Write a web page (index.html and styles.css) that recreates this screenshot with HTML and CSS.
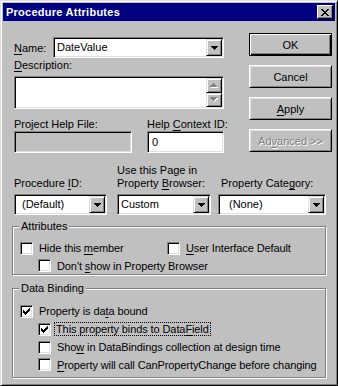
FILE: index.html
```html
<!DOCTYPE html>
<html lang="en">
<head>
    <meta charset="utf-8">
    <title>Procedure Attributes</title>
    <link rel="stylesheet" href="styles.css">
</head>
<body>
<div class="window">
    <div class="titlebar">
        <span class="title">Procedure Attributes</span>
        <button class="close-btn">
            <svg width="8" height="7" viewBox="0 0 8 7" shape-rendering="crispEdges"><path d="M0 0h2v1h-2zM6 0h2v1h-2zM1 1h2v1h-2zM5 1h2v1h-2zM2 2h4v1h-4zM3 3h2v1h-2zM2 4h4v1h-4zM1 5h2v1h-2zM5 5h2v1h-2zM0 6h2v1h-2zM6 6h2v1h-2z" fill="#000"/></svg>
        </button>
    </div>
    <div class="dialog">
        <div class="top">
            <div class="fields">
                <div class="name-row">
                    <span class="name-label"><u>N</u>ame:</span>
                    <div class="combo name-combo">
                        <span class="combo-text">DateValue</span>
                        <span class="drop-btn"><svg width="7" height="4" viewBox="0 0 7 4" shape-rendering="crispEdges"><path d="M0 0h7v1h-7zM1 1h5v1h-5zM2 2h3v1h-3zM3 3h1v1h-1z" fill="#000"/></svg></span>
                    </div>
                </div>
                <div class="desc-label"><u>D</u>escription:</div>
                <div class="field desc-box">
                    <div class="vscroll">
                        <span class="scroll-btn"><svg width="8" height="5" viewBox="0 0 8 5" shape-rendering="crispEdges"><path d="M4 1h1v1h-1zM3 2h3v1h-3zM2 3h5v1h-5zM1 4h7v1h-7z" fill="#fff"/><path d="M3 0h1v1h-1zM2 1h3v1h-3zM1 2h5v1h-5zM0 3h7v1h-7z" fill="#808080"/></svg></span>
                        <span class="scroll-btn"><svg width="8" height="5" viewBox="0 0 8 5" shape-rendering="crispEdges"><path d="M1 1h7v1h-7zM2 2h5v1h-5zM3 3h3v1h-3zM4 4h1v1h-1z" fill="#fff"/><path d="M0 0h7v1h-7zM1 1h5v1h-5zM2 2h3v1h-3zM3 3h1v1h-1z" fill="#808080"/></svg></span>
                    </div>
                </div>
                <div class="help-row">
                    <div class="help-file">
                        <div class="label">Project Help File:</div>
                        <div class="field disabled-box"></div>
                    </div>
                    <div class="help-id">
                        <div class="label">Help <u>C</u>ontext ID:</div>
                        <div class="field text-box">0</div>
                    </div>
                </div>
            </div>
            <div class="buttons">
                <button class="btn default-btn">OK</button>
                <button class="btn">Cancel</button>
                <button class="btn"><u>A</u>pply</button>
                <button class="btn disabled-btn">Ad<u>v</u>anced &gt;&gt;</button>
            </div>
        </div>

        <div class="combos-row">
            <div class="combo-col proc-col">
                <div class="label">Procedure <u>I</u>D:</div>
                <div class="combo">
                    <span class="combo-text indent">(Default)</span>
                    <span class="drop-btn"><svg width="7" height="4" viewBox="0 0 7 4" shape-rendering="crispEdges"><path d="M0 0h7v1h-7zM1 1h5v1h-5zM2 2h3v1h-3zM3 3h1v1h-1z" fill="#000"/></svg></span>
                </div>
            </div>
            <div class="combo-col page-col">
                <div class="label">Use this Page in<br>Property <u>B</u>rowser:</div>
                <div class="combo">
                    <span class="combo-text">Custom</span>
                    <span class="drop-btn"><svg width="7" height="4" viewBox="0 0 7 4" shape-rendering="crispEdges"><path d="M0 0h7v1h-7zM1 1h5v1h-5zM2 2h3v1h-3zM3 3h1v1h-1z" fill="#000"/></svg></span>
                </div>
            </div>
            <div class="combo-col cat-col">
                <div class="label">Property Cate<u>g</u>ory:</div>
                <div class="combo">
                    <span class="combo-text indent-wide">(None)</span>
                    <span class="drop-btn"><svg width="7" height="4" viewBox="0 0 7 4" shape-rendering="crispEdges"><path d="M0 0h7v1h-7zM1 1h5v1h-5zM2 2h3v1h-3zM3 3h1v1h-1z" fill="#000"/></svg></span>
                </div>
            </div>
        </div>

        <fieldset class="group attributes">
            <legend>Attributes</legend>
            <div class="check-row">
                <label class="check wide"><span class="box"></span><span class="check-text">Hide this <u>m</u>ember</span></label>
                <label class="check"><span class="box"></span><span class="check-text"><u>U</u>ser Interface Default</span></label>
            </div>
            <div class="check-row sub short">
                <label class="check"><span class="box"></span><span class="check-text">Don't <u>s</u>how in Property Browser</span></label>
            </div>
        </fieldset>

        <fieldset class="group binding">
            <legend>Data Binding</legend>
            <div class="check-row">
                <label class="check"><span class="box"><svg width="9" height="9" viewBox="0 0 9 9" shape-rendering="crispEdges"><path d="M7 1h1v1h-1zM6 2h2v1h-2zM1 3h1v1h-1zM5 3h3v1h-3zM1 4h2v1h-2zM4 4h3v1h-3zM1 5h5v1h-5zM2 6h3v1h-3zM3 7h1v1h-1z" fill="#000"/></svg></span><span class="check-text">Property is da<u>t</u>a bound</span></label>
            </div>
            <div class="check-row sub">
                <label class="check"><span class="box"><svg width="9" height="9" viewBox="0 0 9 9" shape-rendering="crispEdges"><path d="M7 1h1v1h-1zM6 2h2v1h-2zM1 3h1v1h-1zM5 3h3v1h-3zM1 4h2v1h-2zM4 4h3v1h-3zM1 5h5v1h-5zM2 6h3v1h-3zM3 7h1v1h-1z" fill="#000"/></svg></span><span class="check-text focused">This property binds to Data<u>F</u>ield</span></label>
            </div>
            <div class="check-row sub">
                <label class="check"><span class="box"></span><span class="check-text">Sho<u>w</u> in DataBindings collection at design time</span></label>
            </div>
            <div class="check-row sub short">
                <label class="check"><span class="box"></span><span class="check-text"><u>P</u>roperty will call CanPropertyChange before changing</span></label>
            </div>
        </fieldset>
    </div>
</div>
</body>
</html>
```

FILE: styles.css
```css
* { box-sizing: border-box; }
body {
    margin: 0;
    background-color: #c0c0c0;
    font-family: "Liberation Sans", Arial, sans-serif;
    font-size: 11px;
    color: #000;
}
u { text-decoration-thickness: 1px; text-underline-offset: 2px; }

/* window frame */
.window {
    width: 338px;
    height: 386px;
    background-color: #c0c0c0;
    border: 1px solid;
    border-color: #dfdfdf #000 #000 #dfdfdf;
    box-shadow: inset 1px 1px #fff, inset -1px -1px #808080;
    padding: 2px;
}
.titlebar {
    height: 18px;
    background-color: #000080;
    display: flex;
    align-items: center;
    justify-content: space-between;
    padding: 0 2px 0 3px;
}
.title {
    color: #fff;
    font-weight: bold;
    font-size: 11px;
    letter-spacing: 0.25px;
}
.close-btn {
    width: 16px;
    height: 14px;
    padding: 0;
    background-color: #c0c0c0;
    border: 1px solid;
    border-color: #fff #000 #000 #fff;
    box-shadow: inset -1px -1px #808080;
    display: flex;
    align-items: center;
    justify-content: center;
}

.dialog { padding: 12px 0 0 11px; }

/* sunken 3d edit fields */
.field, .combo {
    border: 1px solid;
    border-color: #808080 #fff #fff #808080;
    box-shadow: inset 1px 1px #000, inset -1px -1px #dfdfdf;
    background-color: #fff;
    padding: 1px;
}
.combo {
    display: flex;
    height: 21px;
}
.combo-text {
    flex: 1;
    line-height: 17px;
    padding-left: 2px;
}
.combo-text.indent { padding-left: 6px; }
.combo-text.indent-wide { padding-left: 9px; }
.drop-btn {
    width: 16px;
    height: 17px;
    background-color: #c0c0c0;
    border: 1px solid;
    border-color: #dfdfdf #000 #000 #dfdfdf;
    box-shadow: inset 1px 1px #fff, inset -1px -1px #808080;
    display: flex;
    align-items: center;
    justify-content: center;
}
.drop-btn svg { margin-top: 1px; }

/* top part: fields and buttons */
.top { display: flex; }
.fields { width: 210px; padding-top: 4px; }
.name-row { display: flex; align-items: center; }
.name-label { width: 39px; }
.name-combo { width: 171px; }
.desc-label { margin-top: 1px; line-height: 13px; }
.desc-box {
    margin-top: 4px;
    height: 33px;
    display: flex;
    justify-content: flex-end;
}
.vscroll {
    width: 16px;
    display: flex;
    flex-direction: column;
}
.scroll-btn {
    flex: 1;
    background-color: #c0c0c0;
    border: 1px solid;
    border-color: #dfdfdf #000 #000 #dfdfdf;
    box-shadow: inset 1px 1px #fff, inset -1px -1px #808080;
    display: flex;
    align-items: center;
    justify-content: center;
}
.label { line-height: 13px; white-space: nowrap; }
.help-row {
    display: flex;
    gap: 15px;
    margin-top: 9px;
}
.help-file { width: 118px; }
.help-id { width: 77px; }
.help-row .field { height: 22px; }
.disabled-box { background-color: #c0c0c0; }
.text-box { line-height: 18px; padding-left: 4px; }

.buttons {
    margin-left: 25px;
    display: flex;
    flex-direction: column;
    gap: 9px;
}
.btn {
    width: 83px;
    height: 23px;
    padding: 0;
    font: inherit;
    color: #000;
    background-color: #c0c0c0;
    border: 1px solid;
    border-color: #fff #000 #000 #fff;
    box-shadow: inset 1px 1px #dfdfdf, inset -1px -1px #808080;
}
.default-btn {
    border-color: #000;
    box-shadow: inset 1px 1px #fff, inset -1px -1px #000, inset -2px -2px #808080;
}
.disabled-btn {
    color: #808080;
    text-shadow: 1px 1px #fff;
}

/* three combos row */
.combos-row {
    display: flex;
    margin-top: 11px;
}
.combo-col {
    display: flex;
    flex-direction: column;
    justify-content: flex-end;
}
.combo-col .label { margin-bottom: 4px; }
.proc-col { width: 93px; }
.page-col { width: 94px; margin-left: 10px; }
.cat-col { width: 108px; margin-left: 7px; }
.cat-col .label { padding-left: 3px; }

/* group boxes */
.group {
    width: 314px;
    margin: 5px 0 0 -2px;
    padding: 6px 0 0 7px;
    border: 1px solid #808080;
    box-shadow: inset 1px 1px #fff, 1px 1px #fff;
    min-inline-size: 0;
}
.group legend {
    padding: 0 2px;
    margin-left: -1px;
    line-height: 13px;
    background-color: #c0c0c0;
}
.binding { margin-top: 7px; padding: 7px 0 4px 7px; }
.check-row {
    display: flex;
    height: 18px;
    align-items: center;
}
.check-row.short { height: 17px; }
.check-row.sub { padding-left: 18px; }
.check {
    display: flex;
    align-items: center;
    white-space: nowrap;
}
.check.wide { width: 147px; }
.box {
    width: 13px;
    height: 13px;
    flex: none;
    background-color: #fff;
    border: 1px solid;
    border-color: #808080 #fff #fff #808080;
    box-shadow: inset 1px 1px #000, inset -1px -1px #dfdfdf;
    display: flex;
    align-items: center;
    justify-content: center;
}
.check-text { margin-left: 5px; padding: 0 1px; letter-spacing: -0.1px; }
.check-text.focused {
    margin-left: 4px;
    outline: 1px dotted #000;
    outline-offset: 0;
}
```
